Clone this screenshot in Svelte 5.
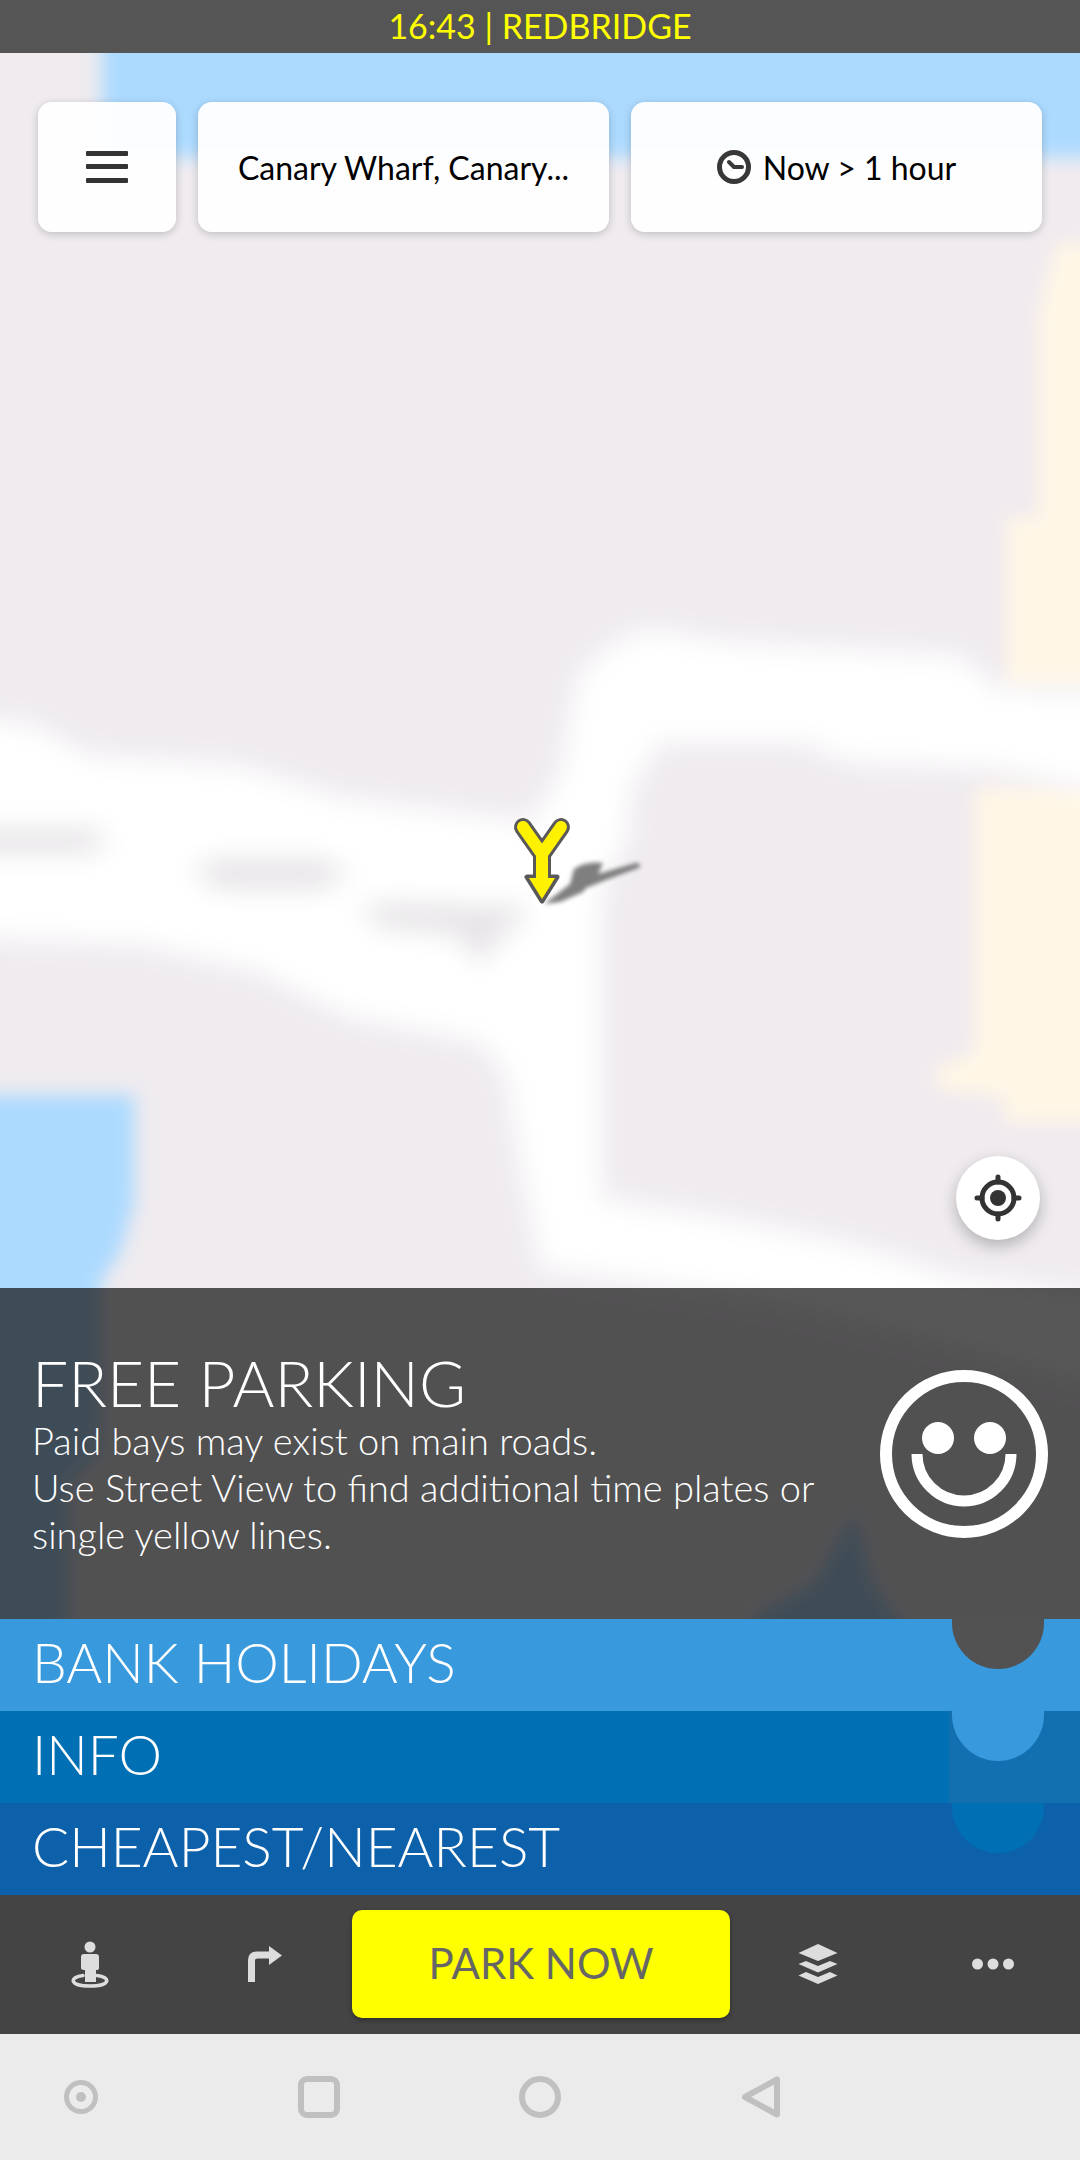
<script>
  const tabs = [
    { label: 'BANK HOLIDAYS', tone: 'sky' },
    { label: 'INFO', tone: 'ocean' },
    { label: 'CHEAPEST/NEAREST', tone: 'deep' }
  ];
</script>

<div class="app">
  <header class="status">16:43 | REDBRIDGE</header>

  <main class="stage">
    <svg class="map" viewBox="0 0 1080 1566" preserveAspectRatio="xMidYMid slice" aria-hidden="true">
      <defs>
        <filter id="soft" x="-10%" y="-10%" width="120%" height="120%"><feGaussianBlur stdDeviation="13" /></filter>
        <filter id="edge" x="-20%" y="-20%" width="140%" height="140%"><feGaussianBlur stdDeviation="9" /></filter>
        <filter id="shade" x="-20%" y="-20%" width="140%" height="140%"><feGaussianBlur stdDeviation="2" /></filter>
      </defs>
      <rect width="1080" height="1566" fill="#efebef" />
      <g filter="url(#edge)">
        <path d="M102-40H1120V104H102z" fill="#acdaff" />
        <path d="M-40 1042H134V1150L120 1200 100 1230V1400L68 1430V1600H-40z" fill="#acdaff" />
        <path d="M730 1600L760 1560 815 1530 855 1460 872 1530 920 1600z" fill="#acdaff" />
        <path d="M1120 190H1056L1038 260V464H1006V634H1120z" fill="#fff6e6" />
        <path d="M1120 734H974V1000L936 1014V1036L1004 1044V1070H1120z" fill="#fff6e6" />
      </g>
      <g filter="url(#soft)">
        <path d="M-60 662L30 670 90 702 240 712 340 744 530 768 560 720 578 620 610 592 650 575 720 588 960 602 1000 636 1140 640V746L990 716 850 710 800 690H660L630 740V780L602 840V1146L700 1160 850 1190 960 1224 1140 1246V1348L960 1296 800 1256 670 1234 540 1216 534 1180 520 1110 505 1020 480 990 350 965 260 920 140 892-60 884z" fill="#fff" />
        <g fill="#e6e3e6">
          <path d="M-60 776H90L110 788 90 800H-60z" />
          <path d="M190 816L220 806H320L350 820 320 836H220z" />
          <path d="M360 854L390 850 525 854 520 872 500 880 490 905 472 905 460 882 380 874z" />
        </g>
      </g>
      <g transform="translate(542 849)">
        <path d="M2 2L28-18 32-33Q44-41 61-39L56-28 94-39Q102-38 96-34L64-22 44-14 41-10 18 0z" fill="#555" opacity=".75" filter="url(#shade)" />
        <g fill="none" stroke="#5b5859" stroke-width="18" stroke-linecap="round" stroke-linejoin="round"><path d="M-19-75L0-48 19-75" /><path d="M0-48V-22" stroke-linecap="butt" /></g>
        <path d="M-15-25H15L0-1z" fill="#5b5859" stroke="#5b5859" stroke-width="5" stroke-linejoin="round" />
        <g fill="none" stroke="#fff200" stroke-width="12" stroke-linecap="round" stroke-linejoin="round"><path d="M-19-75L0-48 19-75" /><path d="M0-48V-20" stroke-linecap="butt" /></g>
        <path d="M-13-24H13L0-3z" fill="#fff200" />
      </g>
    </svg>

    <nav class="controls" aria-label="Search">
      <button class="card menu" aria-label="Menu">
        <svg width="42" height="32" viewBox="0 0 42 32"><rect width="42" height="5" rx="1" fill="#333" /><rect y="13" width="42" height="5" rx="1" fill="#333" /><rect y="27" width="42" height="5" rx="1" fill="#333" /></svg>
      </button>
      <button class="card">Canary Wharf, Canary...</button>
      <button class="card">
        <svg width="34" height="34" viewBox="0 0 34 34" fill="none" stroke="#383838"><circle cx="17" cy="17" r="14.500" stroke-width="5" /><path d="M12 12L17 17L25 17" stroke-width="4" stroke-linecap="round" stroke-linejoin="round" /></svg>
        Now &gt; 1 hour
      </button>
    </nav>

    <button class="locate" aria-label="My location">
      <svg width="48" height="48" viewBox="0 0 48 48"><g fill="none" stroke="#333" stroke-width="5"><circle cx="24" cy="24" r="16" /><path d="M24 3v5M24 40v5M3 24h5M40 24h5" stroke-linecap="round" /></g><circle cx="24" cy="24" r="8" fill="#333" /></svg>
    </button>

    <section class="summary">
      <div class="copy">
        <h1>FREE PARKING</h1>
        <p>Paid bays may exist on main roads.</p>
        <p>Use Street View to find additional time plates or single yellow lines.</p>
      </div>
      <svg width="168" height="168" viewBox="0 0 168 168" aria-hidden="true"><circle cx="84" cy="84" r="78" fill="none" stroke="#fff" stroke-width="12" /><circle cx="58" cy="68" r="16" fill="#fff" /><circle cx="110" cy="68" r="16" fill="#fff" /><path d="M37 84a47 47 0 0 0 94 0" fill="none" stroke="#fff" stroke-width="11" /></svg>
    </section>
  </main>

  <section class="tabs" aria-label="Details">
    {#each tabs as tab}
      <button class="tab {tab.tone}">{tab.label}<span class="notch"></span></button>
    {/each}
  </section>

  <nav class="toolbar" aria-label="Actions">
    <button aria-label="Street View">
      <svg width="38" height="48" viewBox="0 0 38 48" fill="#ddd"><circle cx="19" cy="7" r="5.500" /><path d="M13 14h12q3 0 3 3v11q0 2-3 2v12H14V30q-4 0-4-2V17q0-3 3-3z" /><path d="M12 35.500C-2 37-2 46 19 46S40 37 26 35.500" fill="none" stroke="#ddd" stroke-width="3.500" stroke-linecap="round" /></svg>
    </button>
    <button aria-label="Directions">
      <svg width="36" height="36" viewBox="0 0 36 36"><path d="M4.500 36V14q0-5 6-5H23" fill="none" stroke="#ddd" stroke-width="7" /><path d="M22 0l13 9.500L22 19z" fill="#ddd" /></svg>
    </button>
    <button class="park">PARK NOW</button>
    <button aria-label="Layers">
      <svg width="40" height="40" viewBox="0 0 40 40" fill="#ddd"><path d="M20 0l19.500 9L20 17 .500 9zM.500 20L8 17l12 5 12-5 7.500 3L20 28.500zM.500 31.500L8 28l12 5 12-5 7.500 3.500L20 40z" /></svg>
    </button>
    <button aria-label="More">
      <svg width="42" height="12" viewBox="0 0 42 12" fill="#ddd"><circle cx="5.500" cy="6" r="5.500" /><circle cx="21" cy="6" r="5.500" /><circle cx="36.500" cy="6" r="5.500" /></svg>
    </button>
  </nav>

  <nav class="system" aria-label="System">
    <button aria-label="Assist"><svg width="34" height="34" viewBox="0 0 34 34"><circle cx="17" cy="17" r="14.500" fill="none" stroke="#c0c0c0" stroke-width="5" /><circle cx="17" cy="17" r="5" fill="#c0c0c0" /></svg></button>
    <button aria-label="Recent apps"><svg width="42" height="42" viewBox="0 0 42 42"><rect x="3" y="3" width="36" height="36" rx="6" fill="none" stroke="#c0c0c0" stroke-width="6" /></svg></button>
    <button aria-label="Home"><svg width="42" height="42" viewBox="0 0 42 42"><circle cx="21" cy="21" r="18" fill="none" stroke="#c0c0c0" stroke-width="6" /></svg></button>
    <button aria-label="Back"><svg width="40" height="42" viewBox="0 0 40 42"><path d="M36 3.500v35L4 21z" fill="none" stroke="#c0c0c0" stroke-width="6" stroke-linejoin="round" /></svg></button>
  </nav>
</div>

<style>
  :global(body) { margin: 0; }
  .app { min-height: 100vh; display: flex; flex-direction: column; font-family: Lato, "Liberation Sans", sans-serif; }
  button { border: 0; padding: 0; background: none; font: inherit; color: inherit; display: flex; align-items: center; justify-content: center; cursor: pointer; }
  svg { display: block; flex: none; }
  .status { background: #555; color: #ff0; text-align: center; font-size: 34px; line-height: 51px; padding-bottom: 2px; }
  .stage { position: relative; flex: 1; display: flex; flex-direction: column; overflow: hidden; }
  .map { position: absolute; inset: 0; width: 100%; height: 100%; }
  .controls { position: relative; display: grid; grid-template-columns: 138px 1fr 1fr; gap: 22px; padding: 49px 38px 0; }
  .card { height: 130px; gap: 12px; border-radius: 14px; background: rgba(255, 255, 255, 0.95); box-shadow: 0 2px 8px rgba(0, 0, 0, 0.2); font-size: 32px; color: #000; white-space: nowrap; }
  .locate { position: relative; width: 84px; height: 84px; margin: auto 40px 48px auto; border-radius: 50%; background: #fff; box-shadow: 0 6px 16px rgba(0, 0, 0, 0.25); }
  .summary { position: relative; display: flex; align-items: center; justify-content: space-between; gap: 32px; padding: 61px 32px; background: rgba(15, 15, 15, 0.7); color: #fff; font-weight: 300; }
  .copy { flex: 1; }
  h1 { margin: 0; font-size: 64px; line-height: 68px; font-weight: 300; }
  p { margin: 0; font-size: 38px; line-height: 47px; }
  .tab { position: relative; width: 100%; height: 92px; padding: 0 32px 6px; justify-content: flex-start; color: #fff; font-size: 55px; font-weight: 300; }
  .notch { position: absolute; top: 0; right: 36px; width: 92px; height: 50px; border-radius: 0 0 46px 46px; }
  .sky { background: #3899dc; }
  .sky .notch { background: #525252; }
  .ocean { background: linear-gradient(#126fb0, #126fb0) right / 131px 100% no-repeat #006fb4; }
  .ocean .notch { background: #3899dc; }
  .deep { background: #0d61aa; }
  .deep .notch { background: #006fb4; }
  .toolbar { display: grid; grid-template-columns: 1fr 1fr 378px 1fr 1fr; background: #444; padding: 15px 0 16px 2px; }
  .park { height: 108px; padding-bottom: 2px; box-sizing: border-box; border-radius: 10px; background: #ff0; color: #666; font-size: 42px; box-shadow: 0 2px 5px rgba(0, 0, 0, 0.35); }
  .system { display: grid; grid-template-columns: 15% 29% 12% 29% 1fr; height: 126px; background: #ebebeb; }
</style>
